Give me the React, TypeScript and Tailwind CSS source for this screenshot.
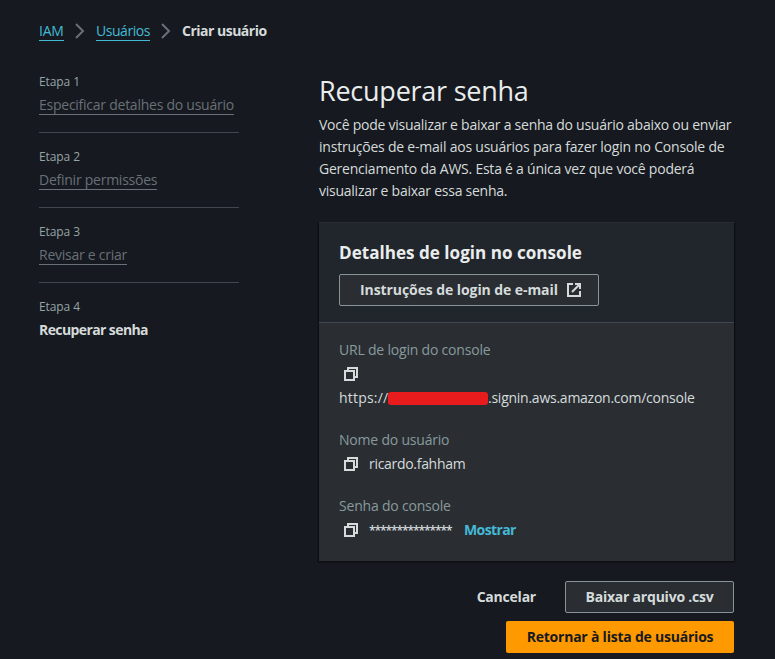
import type { ReactNode } from "react";

function CopyIcon() {
  return (
    <svg width="16" height="16" viewBox="0 0 16 16" fill="none" stroke="#d5dbdb" strokeWidth="2" className="shrink-0">
      <path d="M2 5h9v9H2z" />
      <path d="M5 5V2h9v9h-3" />
    </svg>
  );
}

function ExternalIcon() {
  return (
    <svg width="16" height="16" viewBox="0 0 16 16" fill="none" stroke="#d5dbdb" strokeWidth="2" className="shrink-0">
      <path d="M7 2H2v12h12V9" />
      <path d="M9 2h5v5" />
      <path d="M6 10l8-8" />
    </svg>
  );
}

function Chevron() {
  return (
    <svg width="16" height="16" viewBox="0 0 16 16" fill="none" stroke="#687078" strokeWidth="2" className="shrink-0">
      <path d="M4 1l7 7-7 7" />
    </svg>
  );
}

function Step({ n, children, current }: { n: number; children: ReactNode; current?: boolean }) {
  return (
    <li className={current ? "h-[60px]" : "mb-[13px] h-[62px] border-b border-[#414750]"}>
      <div className="h-[22px] text-[12px] leading-[22px] tracking-[-0.1px] text-[#95a5a6]">Etapa {n}</div>
      {current ? (
        <div className="pt-[1px] text-[14px] font-bold leading-[22px] tracking-[-0.6px] text-[#d5dbdb]">{children}</div>
      ) : (
        <a className="mt-[2px] inline-block h-[20px] whitespace-nowrap border-b border-[#687078] leading-[19px] text-[#687078]">{children}</a>
      )}
    </li>
  );
}

function Field({ label, children }: { label: string; children: ReactNode }) {
  return (
    <div>
      <div className="h-[24px] leading-[24px] tracking-[-0.2px] text-[#889a9c]">{label}</div>
      {children}
    </div>
  );
}

export default function App() {
  return (
    <div className="h-[659px] w-[775px] overflow-hidden bg-[#16191f] pl-[39px] pt-[20px] font-['Open_Sans','Noto_Sans',sans-serif] text-[14px] tracking-[-0.25px] text-[#d5dbdb]">
      <nav className="flex h-[22px] items-center leading-[20px] text-[#44b9d6]">
        <a className="h-[20px] w-[25px] border-b border-[#44b9d6]">IAM</a>
        <span className="ml-[8px] mr-[8px]"><Chevron /></span>
        <a className="h-[20px] w-[54px] whitespace-nowrap border-b border-[#44b9d6] tracking-[-0.45px]">Usuários</a>
        <span className="ml-[8px] mr-[8px]"><Chevron /></span>
        <span className="font-bold tracking-[-0.5px] text-[#d5dbdb]">Criar usuário</span>
      </nav>
      <div className="flex pt-[29px]">
        <ol className="w-[200px] shrink-0">
          <Step n={1}>Especificar detalhes do usuário</Step>
          <Step n={2}>Definir permissões</Step>
          <Step n={3}>Revisar e criar</Step>
          <Step n={4} current>Recuperar senha</Step>
        </ol>
        <main className="ml-[80px] w-[415px]">
          <h1 className="h-[43px] text-[27px] leading-[40px] tracking-[-0.24px] text-[#eaeded]">Recuperar senha</h1>
          <p className="h-[108px] whitespace-nowrap leading-[22px]">
            Você pode visualizar e baixar a senha do usuário abaixo ou enviar
            <br />
            <span className="tracking-[-0.22px]">instruções de e-mail aos usuários para fazer login no Console de</span>
            <br />
            <span className="tracking-[-0.23px]">Gerenciamento da AWS. Esta é a única vez que você poderá</span>
            <br />
            visualizar e baixar essa senha.
          </p>
          <section className="h-[339px] bg-[#2a2e33] shadow-[0_1px_1px_0_#0d0f13,1px_1px_1px_0_#0d0f13,-1px_1px_1px_0_#0d0f13]">
            <header className="h-[101px] border-b border-t border-b-[#414750] border-t-[#2a2e33] bg-[#21252c] px-5 pt-[18px]">
              <h2 className="h-[33px] text-[17.1px] font-bold leading-[24px] tracking-normal text-[#eaeded]">Detalhes de login no console</h2>
              <button className="flex h-[32px] w-[260px] items-center rounded-[2px] border border-[#879596] bg-[#2a2e33] pl-5 font-bold">
                <span className="w-[206px] whitespace-nowrap pb-[2px] text-left tracking-[-0.08px]">Instruções de login de e-mail</span>
                <ExternalIcon />
              </button>
            </header>
            <div className="flex flex-col gap-[18px] px-5 pt-[15px]">
              <Field label="URL de login do console">
                <div className="flex h-[24px] items-center pl-[4px]"><CopyIcon /></div>
                <div className="flex h-[24px] items-center">
                  <span className="w-[49px] pb-[1px] tracking-[0.2px]">https://</span>
                  <span className="h-[13px] w-[100px] rounded-[3px] bg-[#e81c1c]" />
                  <span className="pb-[1px]">.signin.aws.amazon.com/console</span>
                </div>
              </Field>
              <Field label="Nome do usuário">
                <div className="flex h-[24px] items-center pl-[4px]">
                  <CopyIcon />
                  <span className="ml-[10px] pb-[1px] tracking-[-0.3px]">ricardo.fahham</span>
                </div>
              </Field>
              <Field label="Senha do console">
                <div className="flex h-[24px] items-center pl-[4px]">
                  <CopyIcon />
                  <span className="ml-[10px] w-[95px] pt-[2px] text-[12px] font-semibold tracking-[-1.08px]">***************</span>
                  <a className="pb-[2px] font-bold tracking-[-0.6px] text-[#44b9d6]">Mostrar</a>
                </div>
              </Field>
            </div>
          </section>
          <div className="flex flex-wrap items-center justify-end gap-y-[8px] pt-[20px] font-bold tracking-[-0.22px]">
            <button className="mr-[29px] h-[32px] pb-[2px]">Cancelar</button>
            <button className="h-[32px] w-[169px] rounded-[2px] border border-[#879596] bg-[#2a2e33] pb-[2px]">Baixar arquivo .csv</button>
            <button className="h-[32px] w-[228px] rounded-[2px] bg-[#ff9900] pb-[2px] text-[#16191f]">Retornar à lista de usuários</button>
          </div>
        </main>
      </div>
    </div>
  );
}
